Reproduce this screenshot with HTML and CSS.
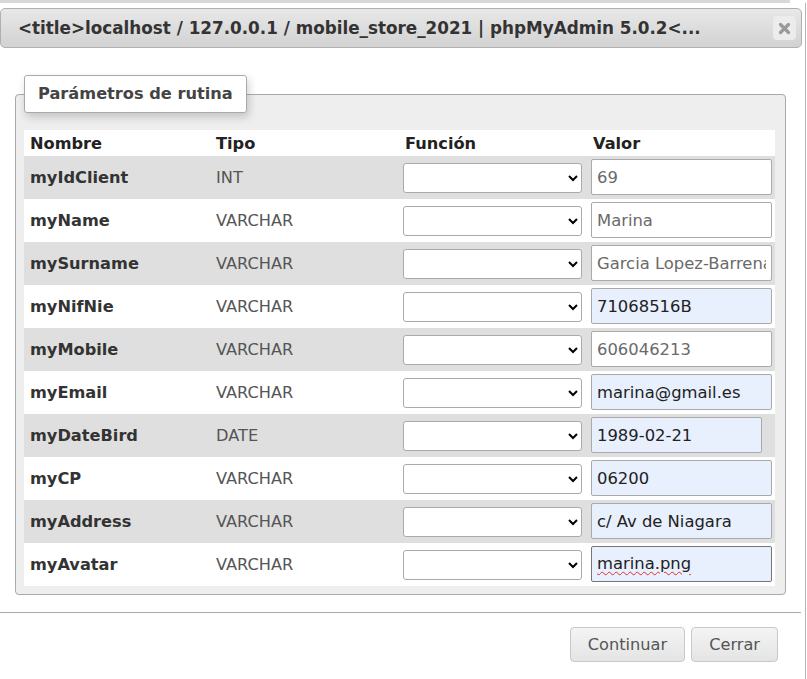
FILE: index.html
```html
<!DOCTYPE html>
<html>
<head>
<meta charset="utf-8">
<link rel="stylesheet" href="styles.css">
</head>
<body>
<div class="strip"></div>
<div class="dialog">
  <div class="titlebar">
    <span class="title">&lt;title&gt;localhost / 127.0.0.1 / mobile_store_2021 | phpMyAdmin 5.0.2&lt;...</span>
    <span class="close"><svg width="13" height="13" viewBox="0 0 13 13"><path d="M2.5 2.5 L10.5 10.5 M10.5 2.5 L2.5 10.5" stroke="#999" stroke-width="3.2" stroke-linecap="round"/></svg></span>
  </div>
  <div class="content">
    <fieldset class="params">
      <legend>Parámetros de rutina</legend>
      <table class="grid">
        <colgroup><col class="c1"><col class="c2"><col class="c3"><col class="c4"></colgroup>
        <thead>
          <tr><th>Nombre</th><th>Tipo</th><th>Función</th><th>Valor</th></tr>
        </thead>
        <tbody>
          <tr class="odd"><td class="name">myIdClient</td><td class="type">INT</td><td class="fn"><select><option></option></select></td><td class="val"><input class="plain" value="69"></td></tr>
          <tr><td class="name">myName</td><td class="type">VARCHAR</td><td class="fn"><select><option></option></select></td><td class="val"><input class="plain" value="Marina"></td></tr>
          <tr class="odd"><td class="name">mySurname</td><td class="type">VARCHAR</td><td class="fn"><select><option></option></select></td><td class="val"><input class="plain" value="Garcia Lopez-Barrena"></td></tr>
          <tr><td class="name">myNifNie</td><td class="type">VARCHAR</td><td class="fn"><select><option></option></select></td><td class="val"><input class="fill" value="71068516B"></td></tr>
          <tr class="odd"><td class="name">myMobile</td><td class="type">VARCHAR</td><td class="fn"><select><option></option></select></td><td class="val"><input class="plain" value="606046213"></td></tr>
          <tr><td class="name">myEmail</td><td class="type">VARCHAR</td><td class="fn"><select><option></option></select></td><td class="val"><input class="fill" value="marina@gmail.es"></td></tr>
          <tr class="odd"><td class="name">myDateBird</td><td class="type">DATE</td><td class="fn"><select><option></option></select></td><td class="val"><input class="fill date" value="1989-02-21"></td></tr>
          <tr><td class="name">myCP</td><td class="type">VARCHAR</td><td class="fn"><select><option></option></select></td><td class="val"><input class="fill" value="06200"></td></tr>
          <tr class="odd"><td class="name">myAddress</td><td class="type">VARCHAR</td><td class="fn"><select><option></option></select></td><td class="val"><input class="fill" value="c/ Av de Niagara"></td></tr>
          <tr><td class="name">myAvatar</td><td class="type">VARCHAR</td><td class="fn"><select><option></option></select></td><td class="val"><div class="field fill focus" contenteditable="true" spellcheck="false"><span class="misspelled">marina.png</span></div></td></tr>
        </tbody>
      </table>
    </fieldset>
  </div>
  <div class="buttonpane">
    <button class="btn">Continuar</button>
    <button class="btn">Cerrar</button>
  </div>
</div>
</body>
</html>
```

FILE: styles.css
```css
html, body {
  margin: 0;
  padding: 0;
  background: #fff;
  font-family: "DejaVu Sans", Verdana, sans-serif;
  color: #444;
}
.strip {
  height: 3px;
  background: #d8d8d8;
  width: 790px;
}
.dialog {
  width: 806px;
  border-right: 1px solid #b4b4b4;
  height: 676px;
  box-sizing: border-box;
  padding-top: 5px;
}
.titlebar {
  width: 802px;
  height: 40px;
  box-sizing: border-box;
  border: 1px solid #b0b0b0;
  border-radius: 5px;
  background: linear-gradient(#e8e8e8, #d2d2d2);
  display: flex;
  align-items: center;
  justify-content: space-between;
  padding: 0 5px 0 17px;
}
.title {
  font-weight: bold;
  font-size: 16.8px;
  color: #333;
  white-space: nowrap;
}
.close {
  width: 23px;
  height: 24px;
  border-radius: 4px;
  background: #ececec;
  display: flex;
  align-items: center;
  justify-content: center;
}
.content {
  padding: 27px 0 0 15px;
}
.params {
  width: 771px;
  box-sizing: border-box;
  margin: 0;
  border: 1px solid #aaa;
  border-radius: 4px;
  background: #eee;
  padding: 17px 10px 8px 8px;
}
.params legend {
  margin: 0;
  padding: 0 13px;
  height: 38px;
  box-sizing: border-box;
  line-height: 36px;
  background: #fff;
  border: 1px solid #aaa;
  border-radius: 3px;
  font-weight: bold;
  font-size: 16.2px;
  color: #444;
  box-shadow: 2px 4px 8px rgba(0,0,0,0.18);
}
.grid {
  border-collapse: collapse;
  width: 751px;
  table-layout: fixed;
}
.c1 { width: 186px; }
.c2 { width: 189px; }
.c3 { width: 188px; }
.c4 { width: 188px; }
.grid th {
  text-align: left;
  font-size: 16.2px;
  font-weight: bold;
  color: #222;
  background: #fff;
  height: 26px;
  padding: 0 0 0 6px;
  vertical-align: middle;
}
.grid tbody tr {
  height: 43px;
  background: #fff;
}
.grid tbody tr.odd {
  background: #dfdfdf;
}
.grid td {
  padding: 0 0 0 6px;
  font-size: 16.2px;
  vertical-align: middle;
}
.grid td.name {
  font-weight: bold;
  color: #333;
}
.grid td.type {
  color: #555;
}
.grid td.fn, .grid td.val {
  padding-left: 4px;
}
select {
  width: 179px;
  height: 30px;
  border: 1px solid #aaa;
  border-radius: 3px;
  background: #fff;
  font-size: 15px;
  display: block;
}
input, .field {
  display: block;
  width: 181px;
  height: 36px;
  box-sizing: border-box;
  border: 1px solid #aaa;
  border-radius: 2px;
  padding: 0 5px;
  font-family: "DejaVu Sans", Verdana, sans-serif;
  font-size: 16.4px;
  margin-top: -1px;
}
.field {
  line-height: 34px;
  white-space: nowrap;
  overflow: hidden;
  outline: none;
}
input.plain {
  background: #fff;
  color: #6a6a6a;
}
input.fill, .field.fill {
  background: #e8f0fe;
  color: #222;
}
input.date {
  width: 171px;
}
.field.focus {
  border-color: #767676;
}
.misspelled {
  text-decoration: underline wavy #e03030;
  text-decoration-thickness: 1px;
  text-underline-offset: 2px;
}
.buttonpane {
  margin-top: 17px;
  width: 801px;
  border-top: 1px solid #aaa;
  display: flex;
  justify-content: flex-end;
  gap: 6px;
  padding: 14px 23px 0 0;
  box-sizing: border-box;
}
.btn {
  height: 35px;
  padding: 0 17px;
  border: 1px solid #c8c8c8;
  border-radius: 4px;
  background: linear-gradient(#f4f4f4, #e4e4e4);
  font-family: "DejaVu Sans", Verdana, sans-serif;
  font-size: 16.2px;
  color: #555;
}
```
